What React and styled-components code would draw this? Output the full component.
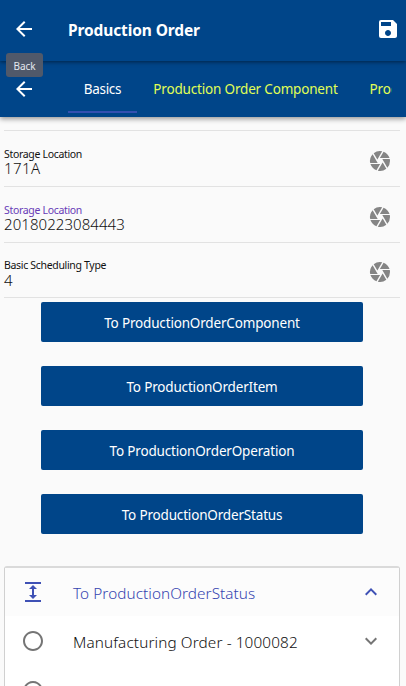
import React from "react";
import styled, { createGlobalStyle } from "styled-components";
import {
  MdArrowBack,
  MdSave,
  MdCamera,
  MdExpand,
  MdExpandLess,
  MdExpandMore,
  MdRadioButtonUnchecked,
} from "react-icons/md";

const GlobalStyle = createGlobalStyle`
  * { box-sizing: border-box; }
  html, body { margin: 0; height: 100%; overflow: hidden; }
  body {
    background: #fafafa;
    color: #212121;
    font-family: "Segoe UI", "Noto Sans", "Open Sans", sans-serif;
  }
  svg { display: block; flex: none; }
`;

const Screen = styled.div`
  width: 406px;
  height: 686px;
  overflow: hidden;
  background: #fafafa;
`;

const AppBar = styled.header`
  position: relative;
  z-index: 3;
  display: flex;
  align-items: center;
  height: 61px;
  padding: 0 6px 3px 12px;
  background: #004589;
  color: #fff;
  box-shadow: 0 1px 4px rgba(0, 0, 0, 0.5);
`;

const Title = styled.h1`
  flex: 1;
  margin: 2px 0 0 32px;
  font-size: 15.5px;
  font-weight: 700;
  line-height: 20px;
  letter-spacing: -0.12px;
  white-space: nowrap;
`;

const Tooltip = styled.div`
  position: absolute;
  left: 6px;
  top: 53px;
  width: 37px;
  height: 24px;
  border-radius: 3px;
  background: #50596a;
  color: #e4e8ee;
  font-size: 10px;
  line-height: 27px;
  text-align: center;
`;

const TabBar = styled.nav`
  position: relative;
  z-index: 2;
  display: flex;
  height: 56px;
  padding-left: 12px;
  background: #004589;
  color: #fff;
  box-shadow: 0 2px 5px rgba(0, 0, 0, 0.4);
`;

const TabBack = styled.div`
  padding-top: 16px;
  margin-right: 32px;
`;

const TabStrip = styled.div`
  display: flex;
  width: 324px;
  height: 52px;
  overflow: hidden;
`;

const Tab = styled.div`
  flex: none;
  width: ${(p) => p.$width}px;
  padding-top: 18px;
  border-bottom: 2px solid ${(p) => (p.$active ? "#3450b0" : "transparent")};
  color: ${(p) => (p.$active ? "#fff" : "#e0ff55")};
  font-size: 13.5px;
  line-height: 20px;
  letter-spacing: ${(p) => p.$spacing}px;
  text-align: center;
  white-space: nowrap;
`;

const Form = styled.main`
  padding: 13px 6px 0 4px;
`;

const Field = styled.div`
  display: flex;
  justify-content: space-between;
  height: ${(p) => p.$height}px;
  padding: ${(p) => p.$height - 40}px 8px 0 0;
  border-top: 1px solid #e2e2e2;
`;

const FieldText = styled.div`
  display: flex;
  flex-direction: column;
`;

const FieldLabel = styled.label`
  color: ${(p) => (p.$focused ? "#673ab7" : "#111")};
  font-size: 10.5px;
  line-height: 14px;
  letter-spacing: -0.32px;
`;

const FieldValue = styled.span`
  color: #111;
  font-size: 15px;
  font-weight: 300;
  line-height: ${(p) => (p.$loose ? 16 : 14)}px;
  letter-spacing: ${(p) => p.$spacing}px;
`;

const ScanIcon = styled(MdCamera)`
  margin-top: 2px;
  color: #858585;
`;

const Actions = styled.div`
  display: flex;
  flex-direction: column;
  gap: 24px;
  padding: 4px 37px 0;
  border-top: 1px solid #e2e2e2;
`;

const ActionButton = styled.button`
  width: 322px;
  height: 40px;
  padding: 2px 0 0;
  border: 0;
  border-radius: 2px;
  background: #004589;
  color: #fff;
  font-family: inherit;
  font-size: 13.5px;
  letter-spacing: -0.17px;
`;

const Card = styled.section`
  width: 396px;
  height: 160px;
  margin-top: 32px;
  border: 1px solid #d0d0d0;
  border-top-width: 2px;
  border-top-color: #dadada;
  border-radius: 3px;
  background: #fff;
`;

const CardRow = styled.div`
  display: flex;
  align-items: center;
  height: ${(p) => (p.$heading ? 48 : 50)}px;
  padding: 0 16px;
  background: ${(p) => (p.$heading ? "#fcfcfc" : "#fff")};
  color: ${(p) => (p.$heading ? "#3f51b5" : "#757575")};
`;

const CardText = styled.span`
  flex: 1;
  margin-left: 28px;
  padding-top: ${(p) => (p.$heading ? 1 : 2)}px;
  color: ${(p) => (p.$heading ? "#3544b0" : "#111")};
  font-size: 15.3px;
  font-weight: 300;
  letter-spacing: ${(p) => p.$spacing}px;
  white-space: nowrap;
`;

const fields = [
  { label: "Storage Location", value: "171A", height: 56, spacing: 0.4 },
  { label: "Storage Location", value: "20180223084443", height: 56, focused: true, spacing: 0.07 },
  { label: "Basic Scheduling Type", value: "4", height: 55, loose: true, spacing: 0 },
];

const actions = [
  "To ProductionOrderComponent",
  "To ProductionOrderItem",
  "To ProductionOrderOperation",
  "To ProductionOrderStatus",
];

export default function App() {
  return (
    <>
      <GlobalStyle />
      <Screen>
        <AppBar>
          <MdArrowBack size={24} />
          <Title>Production Order</Title>
          <MdSave size={24} />
          <Tooltip>Back</Tooltip>
        </AppBar>
        <TabBar>
          <TabBack>
            <MdArrowBack size={24} />
          </TabBack>
          <TabStrip>
            <Tab $width={69} $active $spacing={-0.3}>Basics</Tab>
            <Tab $width={217} $spacing={-0.18}>Production Order Component</Tab>
            <Tab $width={140} $spacing={-0.1}>Production Order</Tab>
          </TabStrip>
        </TabBar>
        <Form>
          {fields.map((f, i) => (
            <Field key={i} $height={f.height}>
              <FieldText>
                <FieldLabel $focused={f.focused}>{f.label}</FieldLabel>
                <FieldValue $loose={f.loose} $spacing={f.spacing}>{f.value}</FieldValue>
              </FieldText>
              <ScanIcon size={24} />
            </Field>
          ))}
          <Actions>
            {actions.map((a) => (
              <ActionButton key={a}>{a}</ActionButton>
            ))}
          </Actions>
          <Card>
            <CardRow $heading>
              <MdExpand size={24} />
              <CardText $heading $spacing={0.07}>To ProductionOrderStatus</CardText>
              <MdExpandLess size={24} />
            </CardRow>
            <CardRow>
              <MdRadioButtonUnchecked size={24} />
              <CardText $spacing={0.12}>Manufacturing Order - 1000082</CardText>
              <MdExpandMore size={24} />
            </CardRow>
            <CardRow>
              <MdRadioButtonUnchecked size={24} />
            </CardRow>
          </Card>
        </Form>
      </Screen>
    </>
  );
}
